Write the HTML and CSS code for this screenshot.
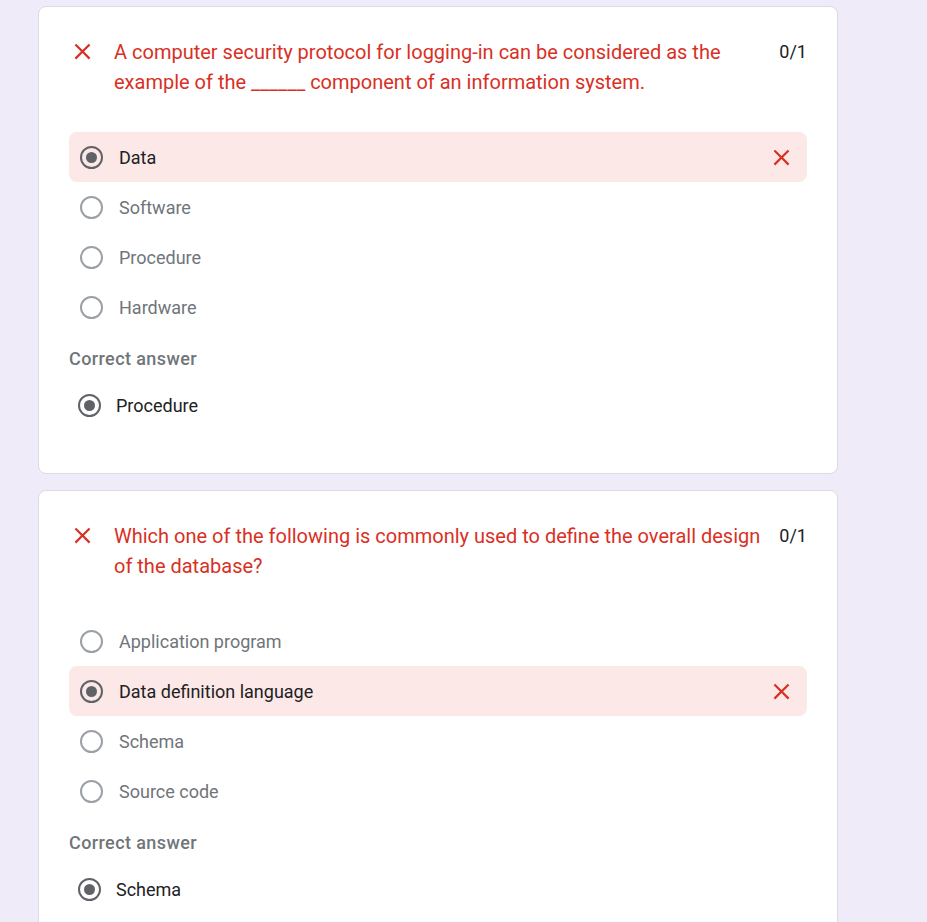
FILE: index.html
```html
<!DOCTYPE html>
<html>
<head>
<meta charset="utf-8">
<link rel="stylesheet" href="styles.css">
</head>
<body>
<div class="page">
  <div class="card">
    <div class="q-head">
      <svg class="q-x" viewBox="0 0 24 24"><path d="M19 6.41L17.590 5 12 10.59 6.41 5 5 6.41 10.59 12 5 17.59 6.41 19 12 13.41 17.59 19 19 17.59 13.41 12z"/></svg>
      <div class="q-text">A computer security protocol for logging-in can be considered as the example of the ______ component of an information system.</div>
      <div class="q-score">0/1</div>
    </div>
    <div class="options">
      <div class="opt wrong"><span class="radio on"></span><span class="opt-label">Data</span><svg class="row-x" viewBox="0 0 24 24"><path d="M19 6.41L17.59 5 12 10.59 6.41 5 5 6.41 10.59 12 5 17.59 6.41 19 12 13.41 17.59 19 19 17.59 13.41 12z"/></svg></div>
      <div class="opt"><span class="radio"></span><span class="opt-label">Software</span></div>
      <div class="opt"><span class="radio"></span><span class="opt-label">Procedure</span></div>
      <div class="opt"><span class="radio"></span><span class="opt-label">Hardware</span></div>
    </div>
    <div class="correct-title">Correct answer</div>
    <div class="correct-opt"><span class="radio on"></span><span class="opt-label sel">Procedure</span></div>
  </div>

  <div class="card">
    <div class="q-head">
      <svg class="q-x" viewBox="0 0 24 24"><path d="M19 6.41L17.59 5 12 10.59 6.41 5 5 6.41 10.59 12 5 17.59 6.41 19 12 13.41 17.59 19 19 17.59 13.41 12z"/></svg>
      <div class="q-text">Which one of the following is commonly used to define the overall design of the database?</div>
      <div class="q-score">0/1</div>
    </div>
    <div class="options">
      <div class="opt"><span class="radio"></span><span class="opt-label">Application program</span></div>
      <div class="opt wrong"><span class="radio on"></span><span class="opt-label">Data definition language</span><svg class="row-x" viewBox="0 0 24 24"><path d="M19 6.41L17.59 5 12 10.59 6.41 5 5 6.41 10.59 12 5 17.59 6.41 19 12 13.41 17.59 19 19 17.59 13.41 12z"/></svg></div>
      <div class="opt"><span class="radio"></span><span class="opt-label">Schema</span></div>
      <div class="opt"><span class="radio"></span><span class="opt-label">Source code</span></div>
    </div>
    <div class="correct-title">Correct answer</div>
    <div class="correct-opt"><span class="radio on"></span><span class="opt-label sel">Schema</span></div>
  </div>
</div>
</body>
</html>
```
FILE: styles.css
```css
html, body {
  margin: 0;
  padding: 0;
  background: #f0ebf8;
  font-family: Roboto, "Liberation Sans", Arial, sans-serif;
}
.page {
  padding: 6px 0 0 38px;
}
.card {
  box-sizing: border-box;
  width: 800px;
  background: #fff;
  border: 1px solid #dadce0;
  border-radius: 8px;
  padding: 30px 30px 43px 30px;
  margin-bottom: 16px;
}
.q-head {
  display: flex;
  align-items: flex-start;
}
.q-x {
  flex: none;
  width: 27px;
  height: 27px;
  fill: #d93025;
  margin: 1px 18px 0 0;
}
.q-text {
  flex: 1;
  color: #d93025;
  font-size: 20px;
  line-height: 30px;
  padding-right: 15px;
}
.q-score {
  flex: none;
  color: #202124;
  font-size: 18px;
  line-height: 30px;
}
.options {
  margin-top: 35px;
}
.opt {
  display: flex;
  align-items: center;
  height: 50px;
  padding: 0 12px 0 11px;
  border-radius: 8px;
}
.opt.wrong {
  background: #fce8e6;
}
.radio {
  flex: none;
  box-sizing: border-box;
  width: 23px;
  height: 23px;
  border: 2px solid #9aa0a6;
  border-radius: 50%;
  margin-right: 16px;
  position: relative;
}
.radio.on {
  border-color: #5f6368;
}
.radio.on::after {
  content: "";
  position: absolute;
  left: 4px;
  top: 4px;
  width: 11px;
  height: 11px;
  border-radius: 50%;
  background: #5f6368;
}
.opt-label {
  flex: 1;
  font-size: 18px;
  color: #70757a;
}
.opt.wrong .opt-label, .opt-label.sel {
  color: #202124;
}
.row-x {
  flex: none;
  width: 27px;
  height: 27px;
  fill: #d93025;
}
.correct-title {
  margin-top: 15px;
  font-size: 18px;
  line-height: 24px;
  font-weight: 500;
  color: #70757a;
  letter-spacing: 0.4px;
}
.correct-opt {
  display: flex;
  align-items: center;
  height: 50px;
  margin-top: 9px;
  padding-left: 9px;
}
.correct-opt .radio {
  margin-right: 15px;
}
```
